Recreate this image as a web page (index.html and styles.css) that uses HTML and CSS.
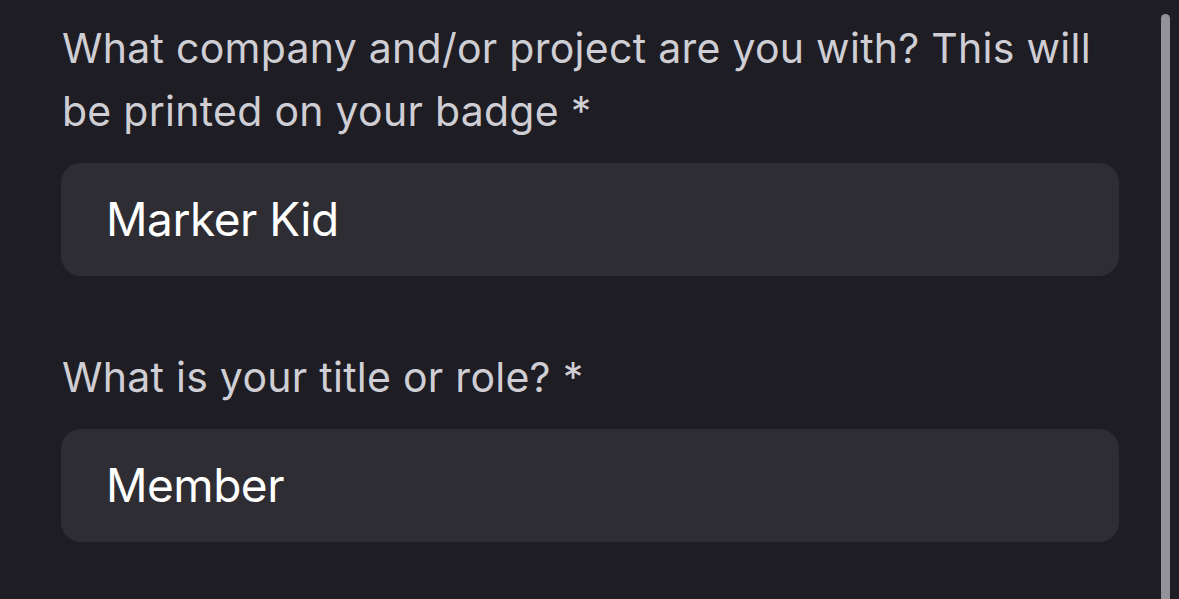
FILE: index.html
```html
<!DOCTYPE html>
<html lang="en">
<head>
<meta charset="utf-8">
<title>Badge form</title>
<link rel="stylesheet" href="styles.css">
</head>
<body>
<main class="form">
  <div class="field">
    <label class="label">What company and/or project are you with? This will be printed on your badge *</label>
    <div class="input">Marker Kid</div>
  </div>
  <div class="field">
    <label class="label">What is your title or role? *</label>
    <div class="input">Member</div>
  </div>
</main>
<div class="scrollbar"></div>
</body>
</html>
```
FILE: styles.css
```css
html, body {
  margin: 0;
  padding: 0;
  height: 100%;
  overflow: hidden;
}
body {
  background: #1e1d23;
  font-family: Inter, "Noto Sans", sans-serif;
  position: relative;
}
.form {
  display: flex;
  flex-direction: column;
  gap: 70px;
  padding: 17px 0 0 61px;
  width: 1058px;
}
.field {
  display: flex;
  flex-direction: column;
  gap: 20px;
}
.label {
  display: block;
  color: #cfced4;
  font-size: 41px;
  line-height: 63px;
  letter-spacing: 0.27px;
  padding-left: 1px;
}
.input {
  height: 113px;
  line-height: 113px;
  background: #2e2d33;
  border-radius: 20px;
  color: #ffffff;
  font-size: 46px;
  letter-spacing: -0.5px;
  padding-left: 45px;
}
.scrollbar {
  position: absolute;
  left: 1161px;
  top: 14px;
  width: 9px;
  bottom: 0;
  background: #939298;
  border-radius: 5px 5px 0 0;
}
```
